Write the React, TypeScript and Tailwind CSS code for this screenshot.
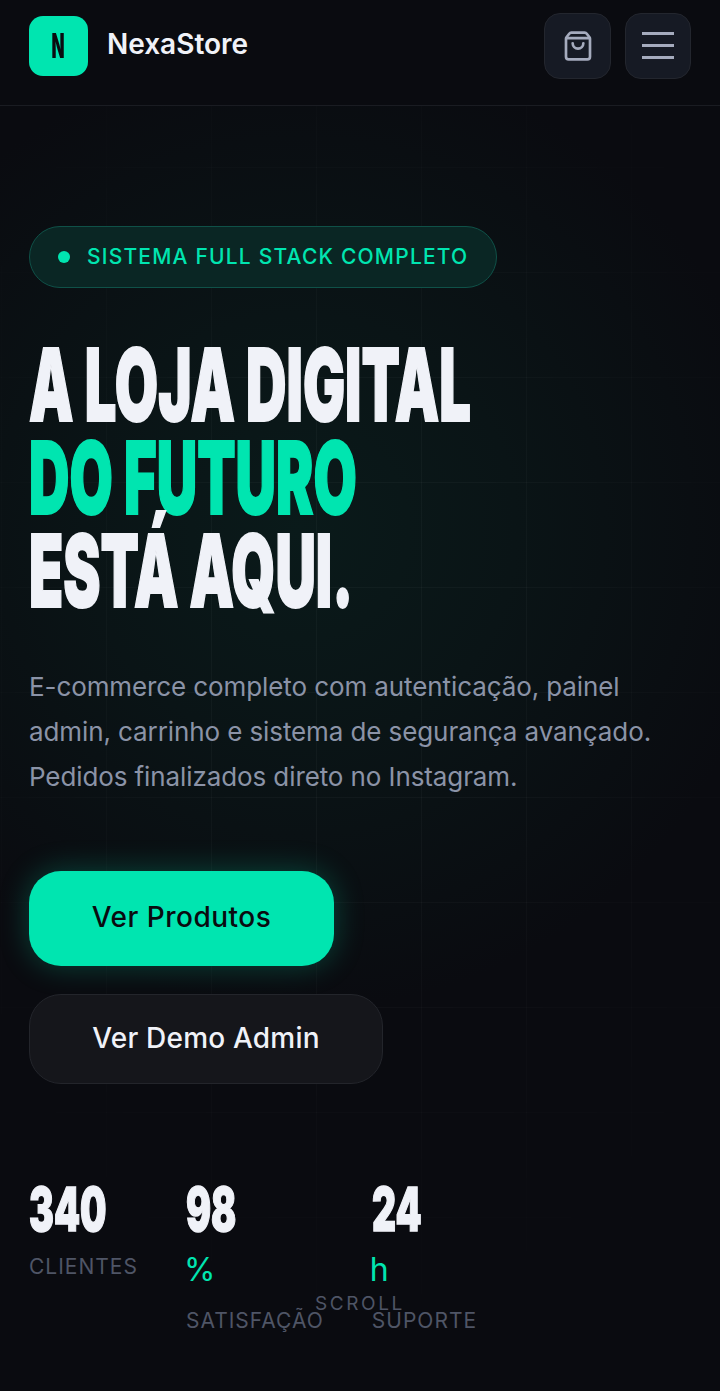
import { ShoppingBag } from "lucide-react";

const display = "font-['Inter','Liberation_Sans',sans-serif] font-black";
const body = "font-['Inter','Noto_Sans',sans-serif]";

function Stat({ value, unit, label }: { value: string; unit?: string; label: string }) {
  return (
    <div className="flex flex-col">
      <div className={`${display} mb-[8px] h-[58px] w-0 origin-left scale-x-[0.62] whitespace-nowrap text-[60px] leading-[58px] text-[#f0f2f8] [-webkit-text-stroke:1.5px_#f0f2f8]`}>{value}</div>
      {unit && <div className="mb-[6px] -ml-[2px] text-[32px] leading-[48px] text-[#00e5b0]">{unit}</div>}
      <div className="mt-[6px] text-[21px] leading-[30px] tracking-[1px] text-[#4f5566]">{label}</div>
    </div>
  );
}

export default function App() {
  return (
    <div className={`${body} relative h-[1391px] w-full overflow-hidden bg-[#0a0b10]`}>
      <div className="pointer-events-none absolute inset-0 bg-[radial-gradient(ellipse_480px_480px_at_300px_530px,#0a1a1a_0%,#0a1416_45%,#0a0b10_100%)]" />
      <div className="pointer-events-none absolute inset-0 bg-[linear-gradient(#ffffff08_1px,transparent_1px),linear-gradient(90deg,#ffffff08_1px,transparent_1px)] bg-[size:105px_105px] bg-[position:1px_62px] [mask-image:radial-gradient(ellipse_500px_760px_at_360px_640px,black_30%,transparent_100%)]" />

      <header className="relative flex h-[106px] items-center justify-between border-b border-[#1a1c22] bg-[#0a0b10] pl-[29px] pr-[29px] pb-[14px]">
        <div className="flex items-center gap-[19px]">
          <div className="flex h-[60px] w-[59px] items-center justify-center rounded-[14px] bg-[#00e5b0]">
            <span className={`${display} origin-center scale-x-[0.5] text-[34px] text-[#0a0b10]`}>N</span>
          </div>
          <span className="mb-[4px] text-[28px] font-semibold text-[#f0f2f8]">NexaStore</span>
        </div>
        <div className="flex items-center gap-[14px]">
          <button className="flex h-[66px] w-[67px] items-center justify-center rounded-[16px] border border-[#23262e] bg-[#161a24] text-[#a5abbd]">
            <ShoppingBag size={32} />
          </button>
          <button className="flex h-[66px] w-[66px] flex-col items-center justify-center gap-[9px] rounded-[16px] border border-[#23262e] bg-[#161a24]">
            <span className="h-[3px] w-[32px] bg-[#a5abbd]" />
            <span className="h-[3px] w-[32px] bg-[#a5abbd]" />
            <span className="h-[3px] w-[32px] bg-[#a5abbd]" />
          </button>
        </div>
      </header>

      <main className="relative px-[29px] pt-[120px]">
        <div className="flex h-[62px] w-[468px] items-center gap-[17px] rounded-full border border-[#0f5148] bg-[#0a2624] pl-[28px]">
          <span className="h-[12px] w-[12px] rounded-full bg-[#00e5b0]" />
          <span className="text-[21px] font-[550] tracking-[1.2px] text-[#00e5b0]">SISTEMA FULL STACK COMPLETO</span>
        </div>

        <h1 className={`${display} mt-[50px] origin-left scale-x-[0.56] whitespace-nowrap text-[100px] leading-[93px] text-[#f0f2f8] [-webkit-text-stroke:2px_currentColor]`}>
          <div>A LOJA DIGITAL</div>
          <div className="text-[#00e5b0]">DO FUTURO</div>
          <div>ESTÁ AQUI.</div>
        </h1>

        <p className="mt-[47px] w-[650px] text-[26px] leading-[45px] tracking-[-0.1px] text-[#8b93a7]">
          E-commerce completo com autenticação, painel admin, carrinho e sistema de segurança avançado. Pedidos finalizados direto no Instagram.
        </p>

        <div className="mt-[72px] flex flex-col items-start gap-[28px]">
          <button className="flex h-[95px] w-[305px] items-center justify-center rounded-[32px] bg-[#00e5b0] pb-[3px] text-[28px] font-[550] tracking-[0.5px] text-[#0a0b10] shadow-[0_0_30px_#00e5b044]">
            Ver Produtos
          </button>
          <button className="flex h-[90px] w-[354px] items-center justify-center rounded-[32px] border border-[#23252b] bg-[#15161b] pb-[2px] text-[28px] font-medium tracking-[0.2px] text-[#f0f2f8]">
            Ver Demo Admin
          </button>
        </div>

        <div className="mt-[96px] flex gap-[48px]">
          <Stat value="340" label="CLIENTES" />
          <Stat value="98" unit="%" label="SATISFAÇÃO" />
          <Stat value="24" unit="h" label="SUPORTE" />
        </div>
      </main>

      <div className="absolute left-[315px] top-[1292px] text-[19px] leading-[24px] tracking-[2.6px] text-[#4f5566]">SCROLL</div>
    </div>
  );
}
